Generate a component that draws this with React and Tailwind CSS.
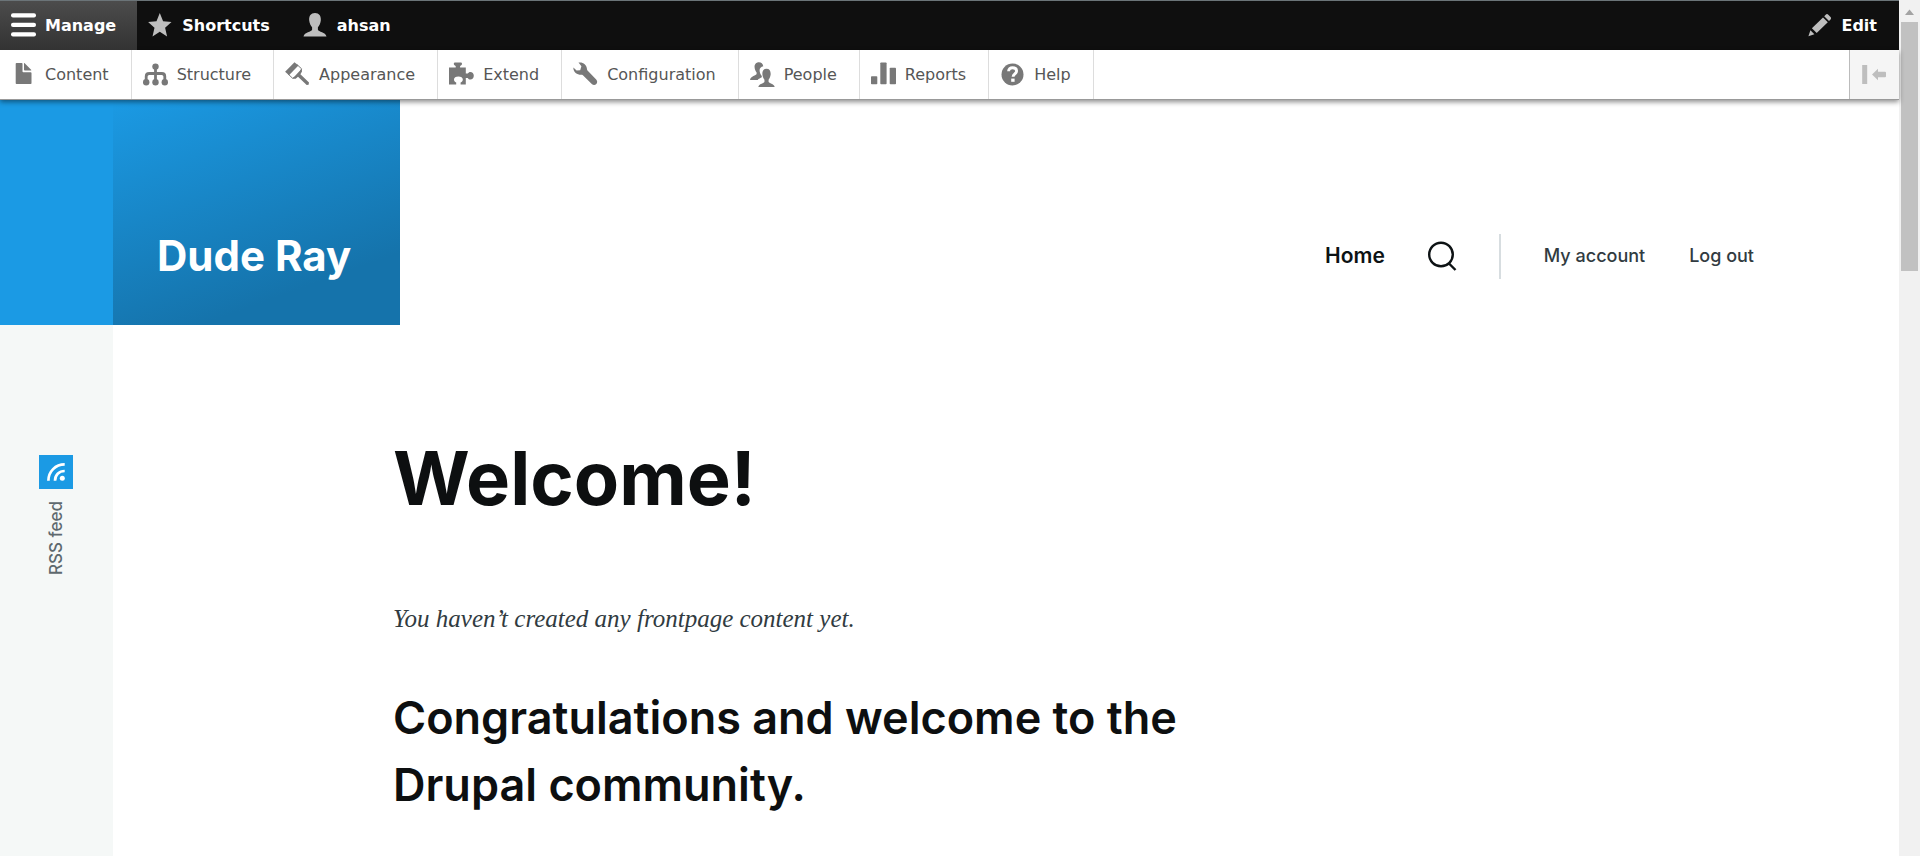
const svgProps = { viewBox: "0 0 25 25", className: "h-[25px] w-[25px] shrink-0", fill: "currentColor", "aria-hidden": true };

const Icon = ({ children }) => <svg {...svgProps}>{children}</svg>;

const personPath =
  "M12 0C7.9 0 5.8 3 6.2 7.4c.3 2.9 1.6 5.2 2.9 6.8v2.6C8.6 19 1.4 19 .5 23.5h23c-.9-4.5-8.1-4.5-8.6-6.7v-2.6c1.3-1.6 2.6-3.9 2.9-6.8C18.2 3 16.1 0 12 0z";

const icons = {
  menu: (
    <Icon>
      <rect x="0" y="0.3" width="25" height="4.3" rx="2" />
      <rect x="0" y="9.8" width="25" height="4.3" rx="2" />
      <rect x="0" y="19.3" width="25" height="4.3" rx="2" />
    </Icon>
  ),
  star: (
    <Icon>
      <path d="M11.8 0 15.1 8.3 23.5 9 17.1 14.8 19.1 23.6 11.8 18.8 4.500 23.6 6.500 14.8.1 9 8.500 8.3z" />
    </Icon>
  ),
  user: (
    <Icon>
      <path d={personPath} />
    </Icon>
  ),
  pencil: (
    <Icon>
      <path d="M18.7 1.700c.8-.8 1.800-.8 2.600 0l2.200 2.300c.7.8.7 1.700 0 2.500l-1.500 1.500-4.800-4.800zM16 4.400l4.800 4.800L9.700 20l-4.800-4.700zM3.400 17.300l4 4L1.400 23.200z" />
    </Icon>
  ),
  content: (
    <Icon>
      <path d="M5.500 1h5.200c.5 0 .8.3.8.8v7.600c0 .5.3.8.8.8h7.400c.5 0 .8.3.8.8v10.200c0 .5-.3.8-.8.8H5.500c-.5 0-.8-.3-.8-.8V1.800c0-.5.3-.8.8-.8zM13 1.600c0-.6.3-.7.7-.3l6.400 6.500c.4.4.2.7-.3.7h-6c-.5 0-.8-.3-.8-.8z" />
    </Icon>
  ),
  structure: (
    <Icon>
      <path d="M12.500 5v15M3.200 20v-5.500q0-3 3-3h12.600q3 0 3 3V20" fill="none" stroke="currentColor" strokeWidth="2.800" />
      <circle cx="12.500" cy="4.600" r="3.200" />
      <circle cx="3.200" cy="20.200" r="3.200" />
      <circle cx="12.500" cy="20.200" r="3.200" />
      <circle cx="21.800" cy="20.200" r="3.200" />
    </Icon>
  ),
  appearance: (
    <Icon>
      <path d="M9.500.3 13.400 3.600 4 13.200.1 9.800z" />
      <path d="M12 2.600l4.600 4.200-2 4.400-3.900 3.600-3.200 1.400-4.400-4.200" fill="none" stroke="currentColor" strokeWidth="1" />
      <path d="M16.700 6.700 17 9.600 15.400 12.300 24 20.400 23.600 22.700 21.700 23.100 13 14.700 10.700 16.700 7.400 16.700z" />
    </Icon>
  ),
  extend: (
    <Icon>
      <path d="M0 5.400h6.700V4C5.500 3.300 4.800 2.600 4.800 1.700 4.800.9 5.400.5 6.300.5h5.200c.9 0 1.500.4 1.500 1.200 0 .9-.7 1.600-1.900 2.300v1.400h5.700v6.200h2c.6-1.100 1.500-1.600 2.500-1.600 2 0 3.500 1.700 3.500 3.800s-1.500 3.800-3.500 3.800c-1 0-1.900-.5-2.500-1.600h-2v6.400h-5.200v-1.800c1.500-.8 2.200-1.600 2.200-3 0-1.900-1.700-3.100-4.400-3.100s-4.400 1.200-4.400 3.100c0 1.400.7 2.200 2.200 3v1.800H0z" />
    </Icon>
  ),
  configuration: (
    <Icon>
      <path d="M5.500.6c3.800-1 8.200 1.800 8.400 6 0 .8.100 1.300.6 1.800l8.700 9.100c1.300 1.400 1.300 3.300.1 4.500s-3.200 1.200-4.500-.1l-8.900-8.600c-.5-.5-1-.6-1.800-.6C3.800 12.700.1 9.600.4 5.400L3.600 8.500 7.200 8.300 8.400 4.200z" />
    </Icon>
  ),
  people: (
    <Icon>
      <path d="M9 .3c-3 0-4.700 2.100-4.400 5.200.2 2 1 3.800 2 5v1.600C6.200 13.700.7 13.900 0 18h7.700c.8-1.400 3-2.100 4.100-2.800v-1.200c-1.400-1.600-2.200-3.700-2.200-6C9.600 6.200 11 5 13.300 4.300 12.800 1.700 11.300.3 9 .3z" />
      <path transform="translate(8 6.800) scale(.71 .77)" d={personPath} />
    </Icon>
  ),
  reports: (
    <Icon>
      <rect x="0" y="14.200" width="6.300" height="8" rx=".8" />
      <rect x="9.300" y=".4" width="6.300" height="21.800" rx=".8" />
      <rect x="18.700" y="5.700" width="6.300" height="16.500" rx=".8" />
    </Icon>
  ),
  help: (
    <Icon>
      <circle cx="12.500" cy="12.500" r="11" />
      <path d="M8.600 9.300c0-2.200 1.600-3.600 4-3.600s4 1.300 4 3.300c0 2.900-3.500 2.900-3.500 5.800" fill="none" stroke="#fff" strokeWidth="2.900" />
      <rect x="11.200" y="16.600" width="3.400" height="3.200" fill="#fff" />
    </Icon>
  ),
};

const adminLinks = [
  ["Content", "content"],
  ["Structure", "structure"],
  ["Appearance", "appearance"],
  ["Extend", "extend"],
  ["Configuration", "configuration"],
  ["People", "people"],
  ["Reports", "reports"],
  ["Help", "help"],
];

function Toolbar() {
  return (
    <div className="relative z-10 font-['DejaVu_Sans',Verdana,sans-serif] text-base">
      <div className="flex h-[50px] border-t border-[#6b7478] bg-[#0f0f0f] font-bold text-white">
        <button className="flex items-center gap-[9px] bg-linear-to-b from-[#4c4c4c] to-[#333] pr-[21px] pl-[11px]">
          {icons.menu}
          Manage
        </button>
        <button className="flex items-center gap-[9px] pr-[22px] pl-[11px]">
          <span className="text-[#bebebe]">{icons.star}</span>
          Shortcuts
        </button>
        <button className="flex items-center gap-[9px] pr-[22px] pl-[11px]">
          <span className="text-[#bebebe]">{icons.user}</span>
          ahsan
        </button>
        <button className="ml-auto flex items-center gap-[9px] pr-[22px] pl-[11px]">
          <span className="text-[#bebebe]">{icons.pencil}</span>
          Edit
        </button>
      </div>
      <nav aria-label="Administration" className="flex h-[50px] border-b border-[#999] bg-white text-[#565656] shadow-[0_2px_5px_rgba(0,0,0,0.45)]">
        {adminLinks.map(([label, icon]) => (
          <a key={label} href="#" className="flex items-center gap-[9px] border-r border-[#ddd] pr-[22px] pl-[11px]">
            <span className="text-[#787878]">{icons[icon]}</span>
            {label}
          </a>
        ))}
        <button aria-label="Vertical orientation" className="ml-auto flex w-[50px] items-center justify-center border-l border-[#bbb] bg-[#f5f5f5] text-[#bebebe]">
          <Icon>
            <rect x="0.200" y="3" width="5" height="19" />
            <path d="M10 12.500 16 6.800v3h7q1 0 1 1v3.500q0 1-1 1H16v3z" />
          </Icon>
        </button>
      </nav>
    </div>
  );
}

function SiteHeader() {
  return (
    <header className="flex h-[225px] justify-between">
      <div className="flex">
        <div className="w-[113px] bg-[#1b9ae4]" />
        <div className="flex w-[287px] items-end bg-[linear-gradient(160deg,#1b9ae4_0%,#1573ab_78%)] px-11 pb-[43px]">
          <a href="#" className="text-[42px] leading-[52px] font-bold whitespace-nowrap text-white">Dude Ray</a>
        </div>
      </div>
      <div className="flex items-center pt-[87px] pr-[145px]">
        <a href="#" className="text-[21px] leading-7 font-semibold text-[#0d1214]">Home</a>
        <button aria-label="Search" className="ml-10 text-[#0d1214]">
          <svg viewBox="0 0 32 32" className="h-8 w-8" fill="none" stroke="currentColor" strokeWidth="2.400">
            <circle cx="16" cy="14.500" r="11.800" />
            <path d="M23.500 23l7 7" />
          </svg>
        </button>
        <nav aria-label="User account" className="ml-[42px] flex h-[45px] items-center gap-11 border-l-2 border-[#d7dde0] pl-[43px] text-lg font-medium text-[#313b41]">
          <a href="#">My account</a>
          <a href="#">Log out</a>
        </nav>
      </div>
    </header>
  );
}

function RssFeed() {
  return (
    <a href="#" className="flex flex-col items-center gap-3 text-[17px] font-medium text-[#5e696e]">
      <span className="flex h-[34px] w-[34px] items-center justify-center bg-[#1b9ae4]">
        <svg viewBox="0 0 18 18" className="h-[18px] w-[18px]" fill="none" stroke="#fff" strokeWidth="2.700" aria-hidden="true">
          <path d="M1.400 17.700C1.400 8.500 8.500 1.400 17.700 1.400M8 17.700C8 12 12 8 17.700 8" />
          <circle cx="15.300" cy="15.300" r="2.500" fill="#fff" stroke="none" />
        </svg>
      </span>
      <span className="rotate-180 leading-5 [writing-mode:vertical-rl]">RSS feed</span>
    </a>
  );
}

function Scrollbar() {
  return (
    <div aria-hidden="true" className="flex w-[21px] shrink-0 flex-col items-center bg-[#f1f1f1]">
      <svg viewBox="0 0 17 22" className="h-[22px] w-[17px]" fill="#a3a3a3">
        <path d="M8.500 9.500 13 15H4z" />
      </svg>
      <div className="h-[249px] w-[17px] bg-[#c1c1c1]" />
    </div>
  );
}

export default function App() {
  return (
    <div className="flex min-h-screen bg-white font-[Inter,sans-serif]">
      <div className="flex min-w-0 flex-1 flex-col">
        <Toolbar />
        <SiteHeader />
        <div className="flex flex-1">
          <aside className="flex w-[113px] shrink-0 flex-col items-center bg-[#f5f8f7] pt-[130px] pr-px">
            <RssFeed />
          </aside>
          <main className="ml-[280px] max-w-[840px] pt-[108px] text-[#0d0f10]">
            <h1 className="text-[74px] leading-[90px] font-bold">Welcome!</h1>
            <p className="mt-[76px] font-['Liberation_Serif',serif] text-[25px] leading-10 text-[#313b41] italic">You haven’t created any frontpage content yet.</p>
            <h2 className="mt-[45px] text-[45px] leading-[67px] font-semibold">Congratulations and welcome to the Drupal community.</h2>
          </main>
        </div>
      </div>
      <Scrollbar />
    </div>
  );
}
